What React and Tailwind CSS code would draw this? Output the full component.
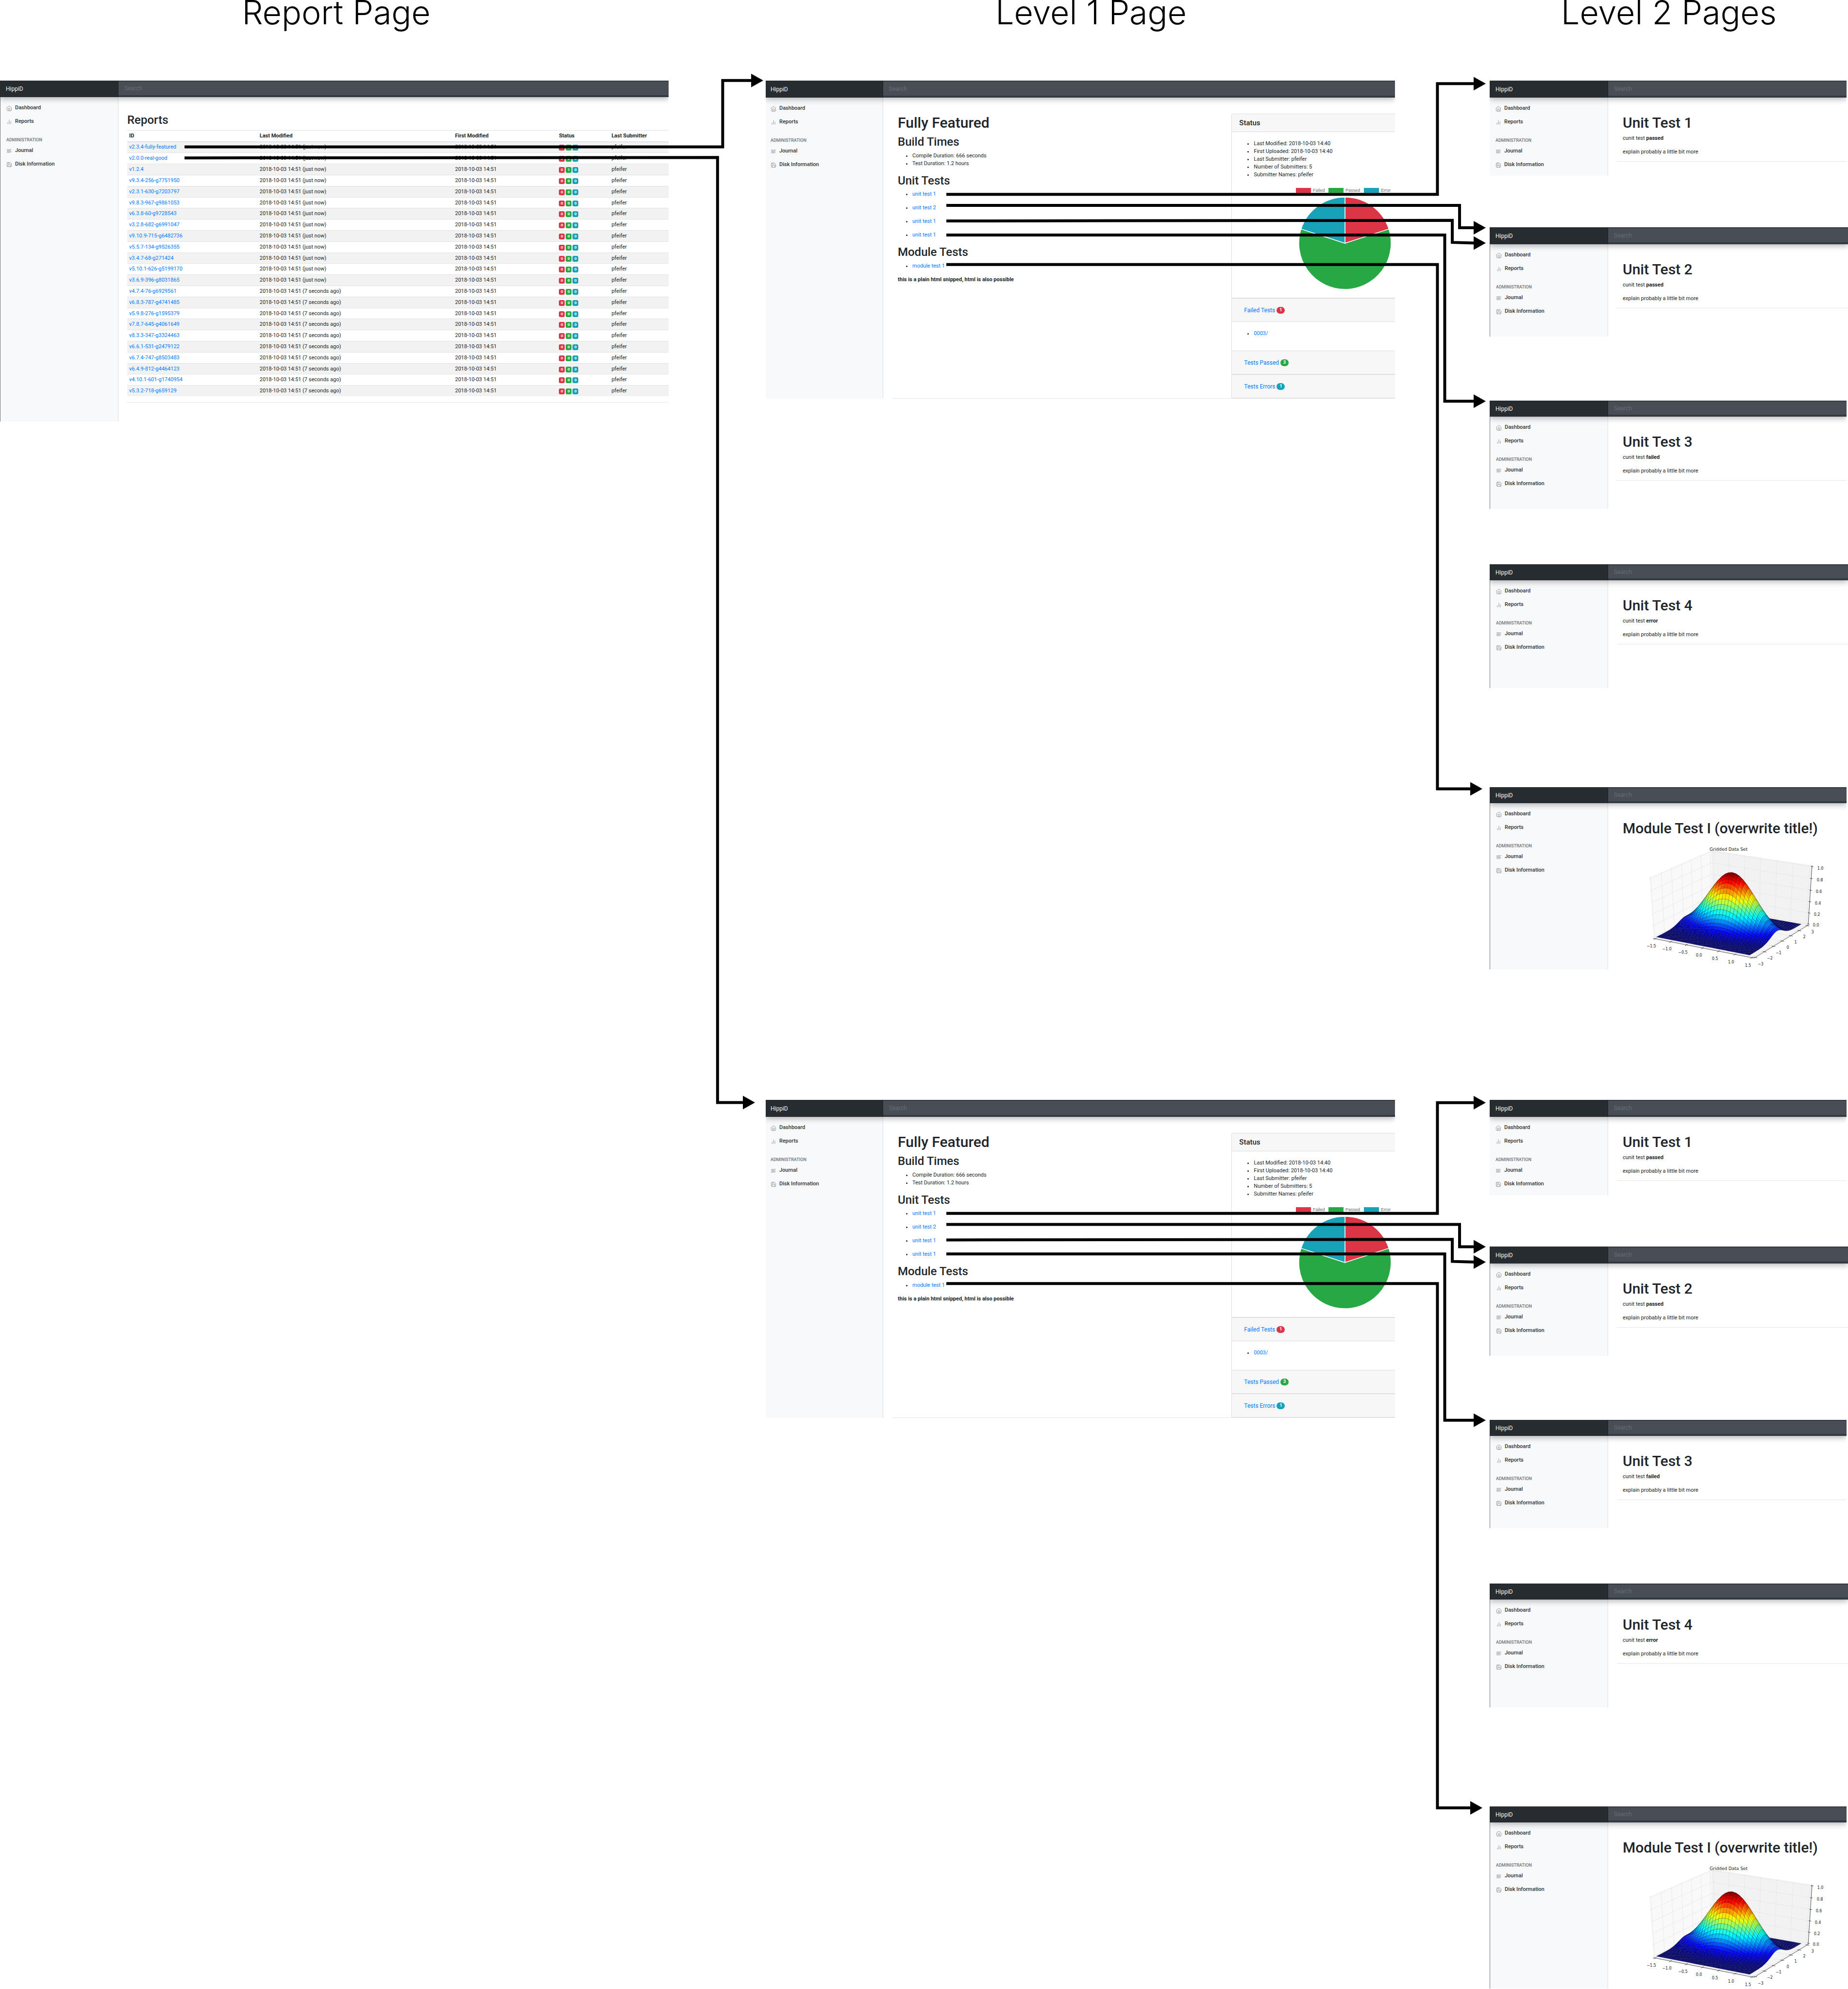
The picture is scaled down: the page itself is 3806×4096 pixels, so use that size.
import React from "react";
import { FiHome, FiBarChart2, FiAlignLeft, FiSave } from "react-icons/fi";

const REPORTS = [
  ["v2.3.4-fully-featured", "just now", [1, 3, 1]],
  ["v2.0.0-real-good", "just now", [0, 0, 0]],
  ["v1.2.4", "just now", [0, 1, 0]],
  ["v9.3.4-256-g7751950", "just now", [0, 0, 0]],
  ["v2.3.1-630-g7203797", "just now", [0, 0, 0]],
  ["v9.8.3-967-g9861053", "just now", [0, 0, 0]],
  ["v6.3.8-60-g9728543", "just now", [0, 0, 0]],
  ["v3.2.8-682-g6991047", "just now", [0, 0, 0]],
  ["v9.10.9-715-g6482736", "just now", [0, 0, 0]],
  ["v5.5.7-134-g9526355", "just now", [0, 0, 0]],
  ["v3.4.7-68-g271424", "just now", [0, 0, 0]],
  ["v5.10.1-626-g5199170", "just now", [0, 0, 0]],
  ["v3.6.9-396-g8031865", "just now", [0, 0, 0]],
  ["v4.7.4-76-g6929561", "7 seconds ago", [0, 0, 0]],
  ["v6.8.3-787-g4741485", "7 seconds ago", [0, 0, 0]],
  ["v5.9.8-276-g1595379", "7 seconds ago", [0, 0, 0]],
  ["v7.8.7-645-g4061649", "7 seconds ago", [0, 0, 0]],
  ["v8.3.3-347-g3324463", "7 seconds ago", [0, 0, 0]],
  ["v6.6.1-531-g2479122", "7 seconds ago", [0, 0, 0]],
  ["v6.7.4-747-g8503483", "7 seconds ago", [0, 0, 0]],
  ["v6.4.9-812-g4464123", "7 seconds ago", [0, 0, 0]],
  ["v4.10.1-601-g1740954", "7 seconds ago", [0, 0, 0]],
  ["v5.3.2-718-g659129", "7 seconds ago", [0, 0, 0]],
];

/* ---------- shared window chrome ---------- */

function NavItem({ icon: Icon, children }) {
  return (
    <li>
      <a href="#" className="flex h-7 items-center gap-1.5 font-medium text-[#333]">
        <Icon className="mt-0.5 size-3 text-[#999]" />
        {children}
      </a>
    </li>
  );
}

function Window({ size, headerSize = "h-[35px]", side = "w-[244px]", inset = "pl-3", edge = true, children }) {
  return (
    <article className={`flex flex-col overflow-hidden bg-white text-[11px] leading-4 text-[#212529] ${size}`}>
      <header className={`relative z-10 flex shrink-0 bg-[#343a42] shadow-[0_4px_12px_rgba(0,0,0,0.28)] ${headerSize}`}>
        <a href="#" className={`flex shrink-0 items-center border-r border-[#1d2124] bg-[#272c30] text-xs text-[#f4f4f4] ${side} ${inset}`}>
          HippiD
        </a>
        <input
          type="text"
          aria-label="Search"
          placeholder="Search"
          className="mt-0.5 mb-1 min-w-0 flex-1 bg-[#494e56] px-3 text-xs text-white outline-none placeholder:text-[#656d75]"
        />
      </header>
      <div className="flex flex-1">
        <nav
          className={`shrink-0 border-r border-r-[#dcdfe2] bg-[#f8f9fb] pt-2 ${side} ${inset} ${edge ? "border-l border-l-[#777]" : ""}`}
        >
          <ul>
            <NavItem icon={FiHome}>Dashboard</NavItem>
            <NavItem icon={FiBarChart2}>Reports</NavItem>
          </ul>
          <h6 className="mt-4 text-[9px] leading-4 font-medium text-[#6c757d]">ADMINISTRATION</h6>
          <ul>
            <NavItem icon={FiAlignLeft}>Journal</NavItem>
            <NavItem icon={FiSave}>Disk Information</NavItem>
          </ul>
        </nav>
        <main className="flex min-w-0 flex-1 flex-col pl-[18px]">{children}</main>
      </div>
    </article>
  );
}

/* ---------- report list ---------- */

const BADGE_COLORS = ["bg-[#dc3545]", "bg-[#28a745]", "bg-[#17a2b8]"];

function ReportWindow() {
  return (
    <Window size="min-h-[702px]" headerSize="h-[34px]">
      <h2 className="pt-[31px] text-2xl leading-8 font-medium">Reports</h2>
      <table className="mt-[5px] h-[548px] w-full table-fixed border-collapse text-left">
        <colgroup>
          <col className="w-[24.1%]" />
          <col className="w-[36.1%]" />
          <col className="w-[19.2%]" />
          <col className="w-[9.7%]" />
          <col />
        </colgroup>
        <thead>
          <tr className="h-[23px] border-t border-b-2 border-[#dee2e6]">
            <th className="px-1">ID</th>
            <th className="px-1">Last Modified</th>
            <th className="px-1">First Modified</th>
            <th className="px-1">Status</th>
            <th className="px-1">Last Submitter</th>
          </tr>
        </thead>
        <tbody>
          {REPORTS.map(([id, ago, counts]) => (
            <tr key={id} className="border-t border-[#dee2e6] odd:bg-[#f2f2f2]">
              <td className="px-1">
                <a href="#" className="text-[#007bff]">{id}</a>
              </td>
              <td className="px-1">2018-10-03 14:51 ({ago})</td>
              <td className="px-1">2018-10-03 14:51</td>
              <td className="px-1">
                <span className="flex gap-0.5 pt-0.5">
                  {counts.map((n, i) => (
                    <span
                      key={i}
                      className={`flex h-3 w-3 items-center justify-center rounded-[3px] text-[8px] leading-none font-bold text-white ${BADGE_COLORS[i]}`}
                    >
                      {n}
                    </span>
                  ))}
                </span>
              </td>
              <td className="px-1">pfeifer</td>
            </tr>
          ))}
        </tbody>
      </table>
      <hr className="mt-3 border-[#e5e5e5]" />
    </Window>
  );
}

/* ---------- level 1 ---------- */

function PieChart() {
  return (
    <svg viewBox="0 0 220 225" className="mt-[13px] ml-[123px] block h-[225px] w-[220px]" role="img" aria-label="Test results">
      <g fontFamily="Liberation Sans, Arial, sans-serif" fontSize="9" fill="#666">
        <rect x="9" y="6" width="31" height="10" fill="#dc3545" />
        <text x="44" y="14">Failed</text>
        <rect x="76" y="6" width="31" height="10" fill="#28a745" />
        <text x="111" y="14">Passed</text>
        <rect x="149" y="6" width="31" height="10" fill="#17a2b8" />
        <text x="184" y="14">Error</text>
      </g>
      <g stroke="#fff" strokeWidth="1.5" strokeLinejoin="bevel">
        <path d="M110 120V25A95 95 0 0 1 200.4 90.6Z" fill="#dc3545" />
        <path d="M110 120L200.4 90.6A95 95 0 1 1 19.6 90.6Z" fill="#28a745" />
        <path d="M110 120L19.6 90.6A95 95 0 0 1 110 25Z" fill="#17a2b8" />
      </g>
    </svg>
  );
}

function PanelHeader({ label, count, color }) {
  return (
    <h5 className="flex h-[49px] items-center border-t border-b border-[#dedede] bg-[#f7f7f7] pl-[25px] text-xs">
      <button type="button" className="flex items-center gap-[3px] text-[#007bff]">
        {label}
        <span className={`flex h-3.5 w-[17px] items-center justify-center rounded-full text-[9px] leading-none font-bold text-white ${color}`}>
          {count}
        </span>
      </button>
    </h5>
  );
}

function StatusCard() {
  return (
    <aside className="mt-[33px] w-[32.5%] shrink-0 self-start rounded-tl-[3px] border-t border-l border-[#dedede]">
      <h4 className="flex h-[37px] items-center border-b border-[#dedede] bg-[#f7f7f7] pl-[15px] text-[15px] font-medium">
        Status
      </h4>
      <ul className="list-disc pt-4 pl-[45px]">
        <li>Last Modified: 2018-10-03 14:40</li>
        <li>First Uploaded: 2018-10-03 14:40</li>
        <li>Last Submitter: pfeifer</li>
        <li>Number of Submitters: 5</li>
        <li>Submitter Names: pfeifer</li>
      </ul>
      <PieChart />
      <div className="mt-[7px] border-t border-[#dedede]">
        <PanelHeader label="Failed Tests" count={1} color="bg-[#dc3545]" />
        <ul className="list-disc pt-4 pb-[27px] pl-[45px]">
          <li>
            <a href="#" className="text-[#007bff]">0003/</a>
          </li>
        </ul>
        <PanelHeader label="Tests Passed" count={3} color="bg-[#28a745]" />
        <PanelHeader label="Tests Errors" count={1} color="bg-[#17a2b8]" />
      </div>
    </aside>
  );
}

function LevelOneWindow() {
  return (
    <Window size="min-h-[653px]" side="w-[242px]" inset="pl-2.5" edge={false}>
      <div className="flex flex-1">
        <div className="flex-1 pt-[34px] pl-3">
          <h1 className="text-3xl leading-9 font-medium">Fully Featured</h1>
          <h2 className="mt-2 text-2xl leading-[26px] font-medium">Build Times</h2>
          <ul className="mt-2 list-disc pl-[30px]">
            <li>Compile Duration: 666 seconds</li>
            <li>Test Duration: 1.2 hours</li>
          </ul>
          <h2 className="mt-3.5 text-2xl leading-[26px] font-medium">Unit Tests</h2>
          <ul className="mt-[7px] list-disc space-y-3 pl-[30px]">
            {["unit test 1", "unit test 2", "unit test 1", "unit test 1"].map((name, i) => (
              <li key={i}>
                <a href="#" className="text-[#007bff]">{name}</a>
              </li>
            ))}
          </ul>
          <h2 className="mt-3.5 text-2xl leading-[26px] font-medium">Module Tests</h2>
          <ul className="mt-2 list-disc pl-[30px]">
            <li>
              <a href="#" className="text-[#007bff]">module test 1</a>
            </li>
          </ul>
          <p className="mt-3 font-bold">this is a plain html snipped, html is also possible</p>
        </div>
        <StatusCard />
      </div>
      <hr className="border-[#e5e5e5]" />
    </Window>
  );
}

/* ---------- level 2 ---------- */

function UnitTestWindow({ number, result, size, headerSize, edge }) {
  return (
    <Window size={size} headerSize={headerSize} edge={edge}>
      <div className="pt-[34px] pl-3">
        <h1 className="text-3xl leading-9 font-medium">Unit Test {number}</h1>
        <p className="mt-1.5">
          cunit test <b>{result}</b>
        </p>
        <p className="mt-3">explain probably a little bit more</p>
      </div>
      <hr className="mt-[11px] border-[#e5e5e5]" />
    </Window>
  );
}

/* Perspective camera: azimuth -60 degrees, elevation 30 degrees, distance 10. */
const AZ = (-60 * Math.PI) / 180;
const EL = (30 * Math.PI) / 180;
const VIEW_N = [Math.cos(AZ) * Math.cos(EL), Math.sin(AZ) * Math.cos(EL), Math.sin(EL)];
const VIEW_U = [-Math.sin(AZ), Math.cos(AZ), 0];
const VIEW_V = [-Math.cos(AZ) * Math.sin(EL), -Math.sin(AZ) * Math.sin(EL), Math.cos(EL)];
const dot = (a, b) => a[0] * b[0] + a[1] * b[1] + a[2] * b[2];

/* Box coordinates run 0..1 on every axis. */
function camera(box) {
  const d = box.map((c, i) => c - 0.5 - 10 * VIEW_N[i]);
  const w = -dot(VIEW_N, d);
  return [dot(VIEW_U, d) / w, dot(VIEW_V, d) / w, w];
}

const LEFT = camera([0, 0, 0])[0];
const RIGHT = camera([1, 1, 0])[0];
const TOP = camera([1, 1, 1])[1];
const BOTTOM = camera([1, 0, 0])[1];

function place(box) {
  const [x, y, w] = camera(box);
  return [
    45 + ((x - LEFT) / (RIGHT - LEFT)) * 319,
    249 - ((y - BOTTOM) / (TOP - BOTTOM)) * 191,
    w,
  ];
}

const pad = (f) => (f + 1 / 48) / (1 + 1 / 24);
const fx = (x) => pad((x + 1.5) / 3);
const fy = (y) => pad((y + 3) / 6);
const fz = (z) => pad(z);
const points = (list) => list.map((b) => place(b).slice(0, 2).map((n) => n.toFixed(2)).join(",")).join(" ");

function jet(v) {
  const channel = (c) => Math.round(255 * Math.max(0, Math.min(1, 1.5 - Math.abs(4 * v - c))));
  return `rgb(${channel(3)},${channel(2)},${channel(1)})`;
}

const FACES = [];
for (let i = 0; i < 29; i++) {
  for (let j = 0; j < 59; j++) {
    const corners = [[i, j], [i + 1, j], [i + 1, j + 1], [i, j + 1]].map(([a, b]) => {
      const x = -1.5 + a * 0.1;
      const y = -3 + b * 0.1;
      return [x, y, Math.exp(-x * x - y * y)];
    });
    const z = corners.reduce((sum, c) => sum + c[2], 0) / 4;
    const boxes = corners.map(([x, y, h]) => [fx(x), fy(y), fz(h)]);
    const depth = boxes.reduce((sum, b) => sum + place(b)[2], 0);
    FACES.push({ points: points(boxes), fill: jet(z), depth });
  }
}
FACES.sort((a, b) => b.depth - a.depth);

const XT = [-1.5, -1, -0.5, 0, 0.5, 1, 1.5];
const YT = [-3, -2, -1, 0, 1, 2, 3];
const ZT = [0, 0.2, 0.4, 0.6, 0.8, 1];

const TICK_LABELS = [
  [41, 224, "−1.5"], [73, 230, "−1.0"], [106, 237, "−0.5"], [139, 243, "0.0"],
  [172, 250, "0.5"], [205, 257, "1.0"], [240, 264, "1.5"],
  [266, 261, "−3"], [285, 249, "−2"], [303, 238, "−1"], [322, 227, "0"],
  [338, 216, "1"], [356, 205, "2"], [373, 195, "3"],
  [380, 181, "0.0"], [382, 159, "0.2"], [384, 136, "0.4"], [386, 112, "0.6"],
  [388, 88, "0.8"], [389, 64, "1.0"],
];

function SurfacePlot() {
  return (
    <svg viewBox="0 16 438 256" className="mt-4 ml-[30px] block h-[256px] w-[438px]" role="img" aria-label="Gridded Data Set">
      <polygon points={points([[0, 0, 0], [0, 1, 0], [0, 1, 1], [0, 0, 1]])} fill="#f9f9f9" />
      <polygon points={points([[0, 1, 0], [1, 1, 0], [1, 1, 1], [0, 1, 1]])} fill="#f2f2f2" />
      <polygon points={points([[0, 0, 0], [1, 0, 0], [1, 1, 0], [0, 1, 0]])} fill="#f5f5f5" />
      <g fill="none" stroke="#e5e5e5" strokeWidth="0.8">
        {XT.map((x) => (
          <polyline key={x} points={points([[fx(x), 0, 0], [fx(x), 1, 0], [fx(x), 1, 1]])} />
        ))}
        {YT.map((y) => (
          <polyline key={y} points={points([[1, fy(y), 0], [0, fy(y), 0], [0, fy(y), 1]])} />
        ))}
        {ZT.map((z) => (
          <polyline key={z} points={points([[0, 0, fz(z)], [0, 1, fz(z)], [1, 1, fz(z)]])} />
        ))}
      </g>
      <g stroke="#000" strokeOpacity="0.5" strokeWidth="0.4" strokeLinejoin="round">
        {FACES.map((f, i) => (
          <polygon key={i} points={f.points} fill={f.fill} />
        ))}
      </g>
      <g fill="none" stroke="#222" strokeWidth="0.8">
        <polyline points={points([[0, 0, 0], [1, 0, 0], [1, 1, 0], [1, 1, 1]])} />
        {XT.map((x) => (
          <polyline key={`x${x}`} points={points([[fx(x), -0.025, 0], [fx(x), 0.02, 0]])} />
        ))}
        {YT.map((y) => (
          <polyline key={`y${y}`} points={points([[0.985, fy(y), 0], [1.02, fy(y), 0]])} />
        ))}
        {ZT.map((z) => (
          <polyline key={`z${z}`} points={points([[0.99, 1, fz(z)], [1.015, 1, fz(z)]])} />
        ))}
      </g>
      <g fontFamily="DejaVu Sans, sans-serif" textAnchor="middle" fill="#222">
        <text x="200" y="28" fontSize="9">Gridded Data Set</text>
        {TICK_LABELS.map(([x, y, label]) => (
          <text key={`${x}-${y}`} x={x} y={y + 3} fontSize="8">
            {label}
          </text>
        ))}
      </g>
    </svg>
  );
}

function ModuleTestWindow() {
  return (
    <Window size="mr-[3px] min-h-[375px]" headerSize="h-[33px]">
      <h1 className="pt-[34px] pl-3 text-3xl leading-9 font-medium whitespace-nowrap">Module Test I (overwrite title!)</h1>
      <SurfacePlot />
    </Window>
  );
}

function LevelTwoColumn() {
  return (
    <div className="flex flex-col">
      <UnitTestWindow number={1} result="passed" size="mr-[3px] min-h-[196px]" edge={false} />
      <UnitTestWindow number={2} result="passed" size="mt-[106px] min-h-[225px]" />
      <UnitTestWindow number={3} result="failed" size="mt-[132px] mr-[3px] min-h-[223px]" headerSize="h-[33px]" />
      <UnitTestWindow number={4} result="error" size="mt-[114px] min-h-[255px]" headerSize="h-[33px]" />
      <div className="mt-[204px]">
        <ModuleTestWindow />
      </div>
    </div>
  );
}

/* ---------- connectors ---------- */

function Arrow({ path, tip }) {
  const [x, y] = tip;
  return (
    <g>
      <path d={path} fill="none" stroke="#000" strokeWidth="6" />
      <path d={`M${x} ${y}l-25 -14v28z`} />
    </g>
  );
}

function LevelOneArrows() {
  return (
    <>
      <Arrow path="M1949 400.4H2960.4V172.3H3038" tip={[3060, 172.3]} />
      <Arrow path="M1949 423.2H3006V469.1H3038" tip={[3060, 469.1]} />
      <Arrow path="M1949 455.1L2991 453.8V499.3L3038 500.6" tip={[3060, 500.6]} />
      <Arrow path="M1949 484H2975.5V826.4H3038" tip={[3060, 826.4]} />
      <Arrow path="M1949 544.9H2960.4V1624.9H3030" tip={[3053, 1624.9]} />
    </>
  );
}

function Connectors() {
  return (
    <svg
      viewBox="0 0 3806 4096"
      preserveAspectRatio="none"
      className="pointer-events-none absolute inset-0 z-20 h-full w-full"
      aria-hidden="true"
    >
      <Arrow path="M380 302.5H1488.4V165.8H1550" tip={[1572, 165.8]} />
      <Arrow path="M380 325.3L1477.8 324.4V2271H1532" tip={[1555, 2271]} />
      <LevelOneArrows />
      <g transform="translate(0 2099)">
        <LevelOneArrows />
      </g>
    </svg>
  );
}

const COLUMNS = "grid grid-cols-[1377fr_200fr_1296fr_195fr_738fr] items-start";

export default function App() {
  return (
    <div className="relative bg-white font-[Roboto,sans-serif]">
      <div className={`${COLUMNS} h-[166px] text-center font-[Inter,sans-serif] text-[68px] leading-[50px] font-light text-black`}>
        <h1 className="pl-2">Report Page</h1>
        <h1 className="col-start-3 pl-11">Level 1 Page</h1>
        <h1 className="col-start-5 whitespace-nowrap">Level 2 Pages</h1>
      </div>
      <section className={`${COLUMNS} min-h-[2099px]`}>
        <ReportWindow />
        <div className="col-start-3">
          <LevelOneWindow />
        </div>
        <div className="col-start-5">
          <LevelTwoColumn />
        </div>
      </section>
      <section className={COLUMNS}>
        <div className="col-start-3">
          <LevelOneWindow />
        </div>
        <div className="col-start-5">
          <LevelTwoColumn />
        </div>
      </section>
      <Connectors />
    </div>
  );
}
